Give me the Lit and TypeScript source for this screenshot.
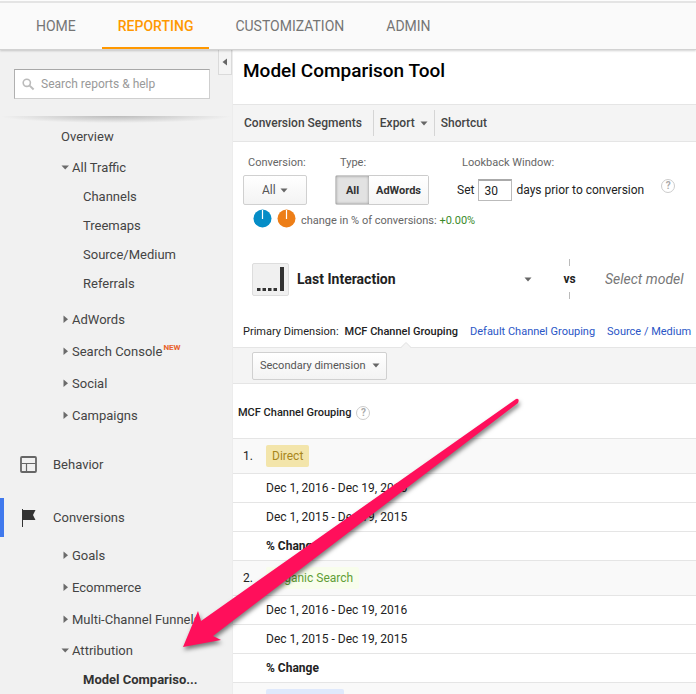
import { LitElement, html, css, svg, nothing } from "lit";
import { customElement } from "lit/decorators.js";
import { classMap } from "lit/directives/class-map.js";

interface NavNode {
  label: string;
  open?: boolean;
  leaf?: boolean;
  fresh?: boolean;
  current?: boolean;
  children?: NavNode[];
}

interface Channel {
  name: string;
  tone: string;
}

const TABS = ["HOME", "REPORTING", "CUSTOMIZATION", "ADMIN"];

const ACQUISITION: NavNode[] = [
  { label: "Overview", leaf: true },
  {
    label: "All Traffic",
    open: true,
    children: [
      { label: "Channels" },
      { label: "Treemaps" },
      { label: "Source/Medium" },
      { label: "Referrals" },
    ],
  },
  { label: "AdWords" },
  { label: "Search Console", fresh: true },
  { label: "Social" },
  { label: "Campaigns" },
];

const CONVERSIONS: NavNode[] = [
  { label: "Goals" },
  { label: "Ecommerce" },
  { label: "Multi-Channel Funnels" },
  {
    label: "Attribution",
    open: true,
    children: [{ label: "Model Compariso...", current: true }],
  },
];

const CHANNELS: Channel[] = [
  { name: "Direct", tone: "gold" },
  { name: "Organic Search", tone: "green" },
  { name: "", tone: "blue" },
];

const PERIODS = ["Dec 1, 2016 - Dec 19, 2016", "Dec 1, 2015 - Dec 19, 2015"];

const base = css`
  * {
    box-sizing: border-box;
  }
  ul {
    list-style: none;
    margin: 0;
    padding: 0;
  }
  a {
    color: inherit;
    text-decoration: none;
  }
  button,
  input,
  select {
    font: inherit;
    color: inherit;
    margin: 0;
    border-radius: 0;
  }
  button {
    cursor: pointer;
  }
  select {
    appearance: none;
  }
  svg {
    display: block;
  }
`;

@customElement("top-nav")
export class TopNav extends LitElement {
  static styles = [
    base,
    css`
      :host {
        display: block;
        position: relative;
        z-index: 1;
        margin-top: 1px;
        background: #fafafa;
        border-top: 2px solid #e4e4e4;
        border-bottom: 1px solid #d2d2d2;
        box-shadow: 0 1px 2px rgba(0, 0, 0, 0.18);
      }
      .tabs {
        display: flex;
        padding-left: 20px;
        gap: 10px;
      }
      .tab {
        display: block;
        padding: 0 16px;
        line-height: 46px;
        font-size: 14px;
        height: 46px;
        color: #757575;
      }
      .tab.active {
        color: #ff9800;
        font-weight: 500;
        border-bottom: 2px solid #ff9800;
      }
    `,
  ];

  render() {
    return html`<nav>
      <ul class="tabs">
        ${TABS.map(
          (t) => html`<li>
            <a href="#" class=${classMap({ tab: true, active: t === "REPORTING" })}>${t}</a>
          </li>`,
        )}
      </ul>
    </nav>`;
  }
}

@customElement("side-bar")
export class SideBar extends LitElement {
  static styles = [
    base,
    css`
      :host {
        display: block;
        position: relative;
        background: #f1f1f1;
        color: #444;
        font-size: 12px;
      }
      .collapse {
        position: absolute;
        top: 0;
        right: 0;
        width: 14px;
        height: 25px;
        padding: 0 0 0 3px;
        border: 1px solid #dadada;
        border-top: 0;
        background: #f4f4f4;
      }
      .search {
        display: flex;
        align-items: center;
        gap: 6px;
        margin: 19px 22px 0 14px;
        height: 30px;
        padding: 0 7px;
        background: #fff;
        border: 1px solid #cfcfcf;
        border-top-color: #a8a8a8;
        border-left-color: #b0b0b0;
      }
      .search input {
        flex: 1;
        min-width: 0;
        border: 0;
        padding: 0;
        background: none;
        outline: 0;
      }
      .search input::placeholder {
        color: #999;
        opacity: 1;
      }
      .rule {
        height: 7px;
        margin: 17px 0 -3px;
        border: 0;
        background: radial-gradient(ellipse 50% 100% at 50% 0, #bbb, rgba(241, 241, 241, 0));
      }
      .link {
        display: flex;
        align-items: center;
        height: 32px;
        padding-left: 61px;
        gap: 3px;
        font-size: 13px;
        white-space: nowrap;
      }
      .link.open {
        height: 30px;
      }
      .sub {
        padding-bottom: 5px;
      }
      .sub .link {
        height: 29px;
        padding-left: 83px;
      }
      .sub .link.current {
        font-weight: 700;
        color: #333;
      }
      .arrow {
        flex: none;
      }
      .new {
        align-self: flex-start;
        padding-top: 6px;
        margin-left: -2px;
        font-size: 8px;
        line-height: 14px;
        font-weight: 700;
        color: #e8622c;
      }
      .section {
        display: flex;
        align-items: center;
        height: 39px;
        margin: 14px 0 0;
        border-left: 4px solid transparent;
        padding-left: 16px;
        gap: 16px;
        font-size: 13px;
      }
      .section.selected {
        border-left-color: #4079ed;
        margin-bottom: 2px;
      }
    `,
  ];

  private arrow(open?: boolean) {
    return html`<svg class="arrow" width="8" height="8" viewBox="0 0 8 8" fill="#6b6b6b">
      <path d=${open ? "M0.5 2.500h7.500L4.200 6.500z" : "M2.500 0.500v7.500l4.500-3.700z"} />
    </svg>`;
  }

  private node(n: NavNode): unknown {
    return html`<li>
      <a href="#" class=${classMap({ link: true, open: !!n.open })}>
        ${n.leaf ? nothing : this.arrow(n.open)}<span>${n.label}</span>${n.fresh
          ? html`<span class="new">NEW</span>`
          : nothing}
      </a>
      ${n.children
        ? html`<ul class="sub">
            ${n.children.map(
              (c) => html`<li>
                <a href="#" class=${classMap({ link: true, current: !!c.current })}>${c.label}</a>
              </li>`,
            )}
          </ul>`
        : nothing}
    </li>`;
  }

  render() {
    return html`
      <button class="collapse" aria-label="Collapse navigation">
        <svg width="6" height="8" viewBox="0 0 6 8"><path d="M5 0.5v7L0.5 4z" fill="#666" /></svg>
      </button>
      <label class="search">
        <svg width="13" height="13" viewBox="0 0 13 13" fill="none" stroke="#bbb">
          <circle cx="4.8" cy="4.8" r="3.6" stroke-width="1.6" />
          <path d="M7.6 7.6l4 3.8" stroke-width="2" />
        </svg>
        <input type="text" placeholder="Search reports & help" aria-label="Search reports and help" />
      </label>
      <hr class="rule" />
      <nav>
        <ul>
          ${ACQUISITION.map((n) => this.node(n))}
        </ul>
        <a href="#" class="section">
          <svg width="17" height="17" viewBox="0 0 17 17" fill="none" stroke="#666">
            <rect x="1" y="1" width="15" height="15" rx="1" stroke-width="1.8" />
            <path d="M1.5 7.5h14M6.5 7.5v8" stroke-width="1.2" />
          </svg>
          <span>Behavior</span>
        </a>
        <a href="#" class="section selected">
          <svg width="17" height="18" viewBox="0 0 17 18" fill="#333">
            <path d="M2 0h1v18h-1zM3 1h12.500l-2.500 5 2.500 5H3z" />
          </svg>
          <span>Conversions</span>
        </a>
        <ul>
          ${CONVERSIONS.map((n) => this.node(n))}
        </ul>
      </nav>
    `;
  }
}

@customElement("report-view")
export class ReportView extends LitElement {
  static styles = [
    base,
    css`
      :host {
        display: block;
        background: #fff;
        color: #222;
        font-size: 12px;
        border-left: 1px solid #ececec;
      }
      .title {
        margin: 0;
        padding: 9px 10px 21px;
        font-size: 19px;
        line-height: 24px;
        font-weight: 500;
        color: #000;
      }
      .toolbar {
        display: flex;
        align-items: center;
        height: 38px;
        padding-left: 11px;
        background: #f4f4f4;
        border: solid #e5e5e5;
        border-width: 1px 0;
        font-weight: 500;
        color: #444;
      }
      .tool {
        display: flex;
        align-items: center;
        gap: 5px;
        height: 26px;
        padding: 0 6px;
        border: 0;
        border-left: 1px solid #d5d5d5;
        background: none;
        white-space: nowrap;
      }
      .tool:first-child {
        border-left: 0;
        padding: 0 11px 0 0;
      }
      .settings {
        display: flex;
        gap: 28px;
        padding: 13px 10px 0;
      }
      .field {
        display: flex;
        flex-direction: column;
        gap: 4px;
      }
      .label {
        padding-left: 5px;
        line-height: 16px;
        font-size: 11px;
        color: #666;
      }
      .pick {
        display: grid;
        align-items: center;
      }
      .pick select {
        grid-area: 1 / 1;
        width: 100%;
        background: none;
        border: 0;
        padding: 0;
        outline: 0;
      }
      .pick .caret {
        grid-area: 1 / 1;
        justify-self: end;
        pointer-events: none;
      }
      .boxed select {
        height: 30px;
        padding: 0 18px;
        border: 1px solid #d0d0d0;
        border-radius: 2px;
        background: linear-gradient(#fff, #f3f3f3);
        color: #555;
      }
      .boxed .caret {
        margin-right: 19px;
      }
      .conv select {
        width: 64px;
      }
      .seg {
        display: flex;
        height: 30px;
        border: 1px solid #ccc;
        border-radius: 2px;
      }
      .seg button {
        border: 0;
        padding: 0 7px;
        font-size: 11px;
        font-weight: 700;
        color: #333;
        background: linear-gradient(#fff, #f5f5f5);
      }
      .seg button.on {
        width: 33px;
        background: #e2e2e2;
        box-shadow: inset 0 0 3px rgba(0, 0, 0, 0.4);
      }
      .look {
        display: flex;
        align-items: center;
        gap: 4px;
        height: 30px;
        white-space: nowrap;
      }
      .look input {
        width: 34px;
        height: 22px;
        padding: 0 5px;
        border: 1px solid #bbb;
        border-top: 2px solid #aaa;
        outline: 0;
      }
      .help {
        display: grid;
        place-items: center;
        width: 14px;
        height: 14px;
        padding: 0;
        border: 1px solid #ccc;
        border-radius: 50%;
        background: none;
        font-size: 10px;
        line-height: 12px;
        font-weight: 700;
        color: #aaa;
      }
      .look .help {
        margin: 0 0 8px 13px;
      }
      .change {
        display: flex;
        gap: 5px;
        padding: 4px 20px 0;
        font-size: 11px;
        line-height: 24px;
        color: #666;
      }
      .gain {
        color: #3b8a2a;
      }
      .models {
        display: flex;
        align-items: center;
        height: 40px;
        margin-top: 26px;
        padding-left: 19px;
        white-space: nowrap;
      }
      .model {
        display: flex;
        flex: 0 0 282px;
        gap: 8px;
        align-items: center;
        font-size: 14px;
        font-weight: 700;
      }
      .thumb {
        width: 37px;
        height: 33px;
        padding: 3px 4px;
        border: 1px solid #ddd;
        border-radius: 2px;
        background: #f0f0f0;
      }
      .model .pick {
        flex: 1;
      }
      .model .caret {
        margin-right: 2px;
      }
      .vs {
        display: flex;
        flex: 0 0 71px;
        flex-direction: column;
        align-items: center;
        gap: 5px;
        line-height: 16px;
        font-weight: 700;
        font-size: 12px;
      }
      .vs::before,
      .vs::after {
        content: "";
        height: 7px;
        border-left: 1px solid #bbb;
      }
      .other {
        font-size: 14px;
        font-style: italic;
        color: #777;
      }
      .dims {
        display: flex;
        gap: 12px;
        padding: 25px 0 0 10px;
        font-size: 11px;
        line-height: 16px;
        white-space: nowrap;
      }
      .dims .lead {
        margin-right: -6px;
      }
      .dims a {
        color: #2a56c6;
        height: 23px;
      }
      .dims a.active {
        position: relative;
        color: #222;
        font-weight: 500;
      }
      .notch {
        position: absolute;
        left: 50%;
        bottom: -1px;
        z-index: 1;
      }
      .toolbar.slim {
        height: 37px;
        padding-left: 19px;
        font-weight: 400;
      }
      .second select {
        width: 135px;
        height: 28px;
        padding: 0 7px;
        font-size: 11px;
      }
      .second .caret {
        margin-right: 7px;
      }
      table {
        width: 100%;
        border-collapse: collapse;
      }
      th,
      td {
        padding: 0;
        height: 29px;
        text-align: left;
        font-weight: 400;
        border-bottom: 1px solid #e5e5e5;
      }
      thead th {
        height: 54px;
        padding: 4px 0 0 5px;
        font-size: 11px;
        font-weight: 500;
      }
      .head {
        display: flex;
        align-items: center;
        gap: 5px;
      }
      .group th,
      .group td {
        height: 35px;
        background: #f9f9f9;
      }
      .num {
        width: 33px;
        padding-left: 10px;
      }
      .strong {
        font-weight: 700;
      }
      .chip {
        display: inline-block;
        vertical-align: middle;
        height: 22px;
        padding: 0 6px;
        border-radius: 2px;
        line-height: 22px;
      }
      .gold {
        background: #f3e5ab;
        color: #a8861b;
      }
      .green {
        background: #f8fdec;
        color: #5f9e35;
      }
      .blue {
        background: #dfe9fc;
        width: 78px;
      }
    `,
  ];

  private caret() {
    return html`<svg class="caret" width="8" height="5" viewBox="0 0 8 5">
      <path d="M0.500 0.500h7L4 4.500z" fill="#666" />
    </svg>`;
  }

  private pie(color: string) {
    return html`<svg width="19" height="19" viewBox="0 0 19 19">
      <circle cx="9.500" cy="9.500" r="9" fill=${color} />
      <path d="M9.500 1v9" stroke="#fff" stroke-width="1.200" />
    </svg>`;
  }

  render() {
    return html`
      <h1 class="title">Model Comparison Tool</h1>
      <div class="toolbar">
        <button class="tool">Conversion Segments</button>
        <button class="tool">Export ${this.caret()}</button>
        <button class="tool">Shortcut</button>
      </div>
      <div class="settings">
        <div class="field">
          <label class="label" for="conversion">Conversion:</label>
          <div class="pick boxed conv">
            <select id="conversion"><option>All</option></select>${this.caret()}
          </div>
        </div>
        <div class="field">
          <span class="label" id="type">Type:</span>
          <div class="seg" role="group" aria-labelledby="type">
            <button class="on" aria-pressed="true">All</button>
            <button aria-pressed="false">AdWords</button>
          </div>
        </div>
        <div class="field">
          <label class="label" for="days">Lookback Window:</label>
          <div class="look">
            <span>Set</span><input id="days" type="text" value="30" /><span
              >days prior to conversion</span
            ><button class="help" aria-label="Help">?</button>
          </div>
        </div>
      </div>
      <div class="change">
        ${this.pie("#058dc7")}${this.pie("#ed7e17")}
        <span>change in % of conversions: <span class="gain">+0.00%</span></span>
      </div>
      <div class="models">
        <div class="model">
          <svg class="thumb" viewBox="0 0 27 25" fill="#333">
            <path
              d="M0 21h3.500v3H0zM5.500 21h3.500v3H5.500zM11 21h3.500v3H11zM16.500 21h3.500v3H16.500zM23 0h4v24H23z"
            />
          </svg>
          <div class="pick">
            <select aria-label="Attribution model"><option>Last Interaction</option></select
            >${this.caret()}
          </div>
        </div>
        <span class="vs">vs</span>
        <div class="pick other">
          <select aria-label="Second model"><option>Select model</option></select>
        </div>
      </div>
      <div class="dims">
        <span class="lead">Primary Dimension:</span>
        <a href="#" class="active"
          >MCF Channel Grouping<svg class="notch" width="10" height="6" viewBox="0 0 10 6">
            <path d="M0 6l5-5 5 5z" fill="#f4f4f4" />
            <path d="M0 5.500L5 .5l5 5" fill="none" stroke="#ddd" /></svg
        ></a>
        <a href="#">Default Channel Grouping</a>
        <a href="#">Source / Medium</a>
      </div>
      <div class="toolbar slim">
        <div class="pick boxed second">
          <select aria-label="Secondary dimension"><option>Secondary dimension</option></select
          >${this.caret()}
        </div>
      </div>
      <table>
        <thead>
          <tr>
            <th colspan="2" scope="col">
              <span class="head"
                >MCF Channel Grouping<button class="help" aria-label="Help">?</button></span
              >
            </th>
          </tr>
        </thead>
        ${CHANNELS.map(
          (c, i) => html`<tbody>
            <tr class="group">
              <td class="num">${c.name ? `${i + 1}.` : nothing}</td>
              <th scope="rowgroup"><span class="chip ${c.tone}">${c.name}</span></th>
            </tr>
            ${c.name
              ? html`${PERIODS.map((p) => html`<tr><td></td><td>${p}</td></tr>`)}
                  <tr><td></td><td class="strong">% Change</td></tr>`
              : nothing}
          </tbody>`,
        )}
      </table>
    `;
  }
}

@customElement("app-root")
export class AppRoot extends LitElement {
  static styles = [
    base,
    css`
      :host {
        display: flex;
        flex-direction: column;
        position: relative;
        height: 100vh;
        overflow: hidden;
        font-family: Roboto, "Liberation Sans", sans-serif;
      }
      .body {
        display: grid;
        grid-template-columns: 232px minmax(0, 1fr);
        flex: 1;
        min-height: 0;
      }
      .pointer {
        position: absolute;
        left: 176px;
        top: 392px;
        z-index: 2;
        pointer-events: none;
        filter: drop-shadow(1px 3px 2px rgba(0, 0, 0, 0.5));
      }
    `,
  ];

  render() {
    return html`
      <top-nav></top-nav>
      <div class="body">
        <side-bar></side-bar>
        <report-view></report-view>
      </div>
      <svg class="pointer" width="350" height="264" viewBox="0 0 350 264" aria-hidden="true">
        ${svg`<path fill="#ff0f5b" d="M7 255L22 219L25 229L340 7Q344 6 342 11L37 244L45 248Z" />`}
      </svg>
    `;
  }
}
